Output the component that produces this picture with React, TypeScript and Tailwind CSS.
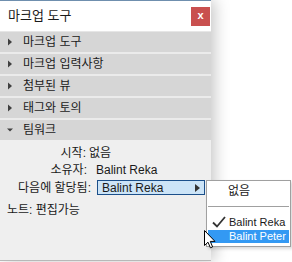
import React from 'react';

const sections = ['마크업 도구', '마크업 입력사항', '첨부된 뷰', '태그와 토의'];

const Arrow: React.FC<{ open?: boolean }> = ({ open }) => (
  <svg width="6" height="8" viewBox="0 0 6 8" className="shrink-0">
    {open ? (
      <path d="M0 2.5 L6 2.5 L3 5.5 Z" fill="#404040" />
    ) : (
      <path d="M1 0.5 L5 4 L1 7.5 Z" fill="#404040" />
    )}
  </svg>
);

const SectionRow: React.FC<{ label: string; open?: boolean }> = ({ label, open }) => (
  <div className="h-[20px] bg-[#d6d6d6] flex items-center pl-[7px] gap-[10px] text-[12px] text-[#1a1a1a]">
    <Arrow open={open} />
    <span>{label}</span>
  </div>
);

const Cursor: React.FC = () => (
  <svg width="12" height="19" viewBox="0 0 12 19" className="absolute left-[204px] top-[230px]">
    <path d="M0.5 0.5 L0.5 15.5 L4 12.2 L6.4 17.8 L8.6 16.9 L6.3 11.4 L11 11.4 Z" fill="#fff" stroke="#000" strokeWidth="1" strokeLinejoin="round" />
  </svg>
);

export default function App() {
  return (
    <div
      className="relative w-[292px] h-[262px] bg-white overflow-hidden"
      style={{ fontFamily: '"Liberation Sans", "Noto Sans CJK KR", sans-serif' }}
    >
      <div className="w-[211px] h-[261px] bg-[#efefef] border-t border-[#6f8fae] border-b border-b-[#b8b8b8] shadow-[4px_0_14px_rgba(0,0,0,0.22)] flex flex-col">
        <div className="h-[30px] bg-white flex items-center justify-between pl-[8px] pr-[1px]">
          <span className="text-[13px] text-[#1a1a1a]">마크업 도구</span>
          <div className="w-[19px] h-[19px] bg-[#c9504f] flex items-center justify-center text-white text-[11px] font-bold leading-none pb-[2px]">
            x
          </div>
        </div>
        <div className="h-[1px] bg-[#e6e6e6]" />
        <div className="flex flex-col gap-[2px] bg-[#ebebeb]">
          {sections.map((s) => (
            <SectionRow key={s} label={s} />
          ))}
          <SectionRow label="팀워크" open />
        </div>

        <div className="flex flex-col text-[12px] text-[#1a1a1a] pt-[4px]">
          <div className="flex h-[17px] items-center">
            <span className="w-[86px] text-right">시작:</span>
            <span className="ml-[3px]">없음</span>
          </div>
          <div className="flex h-[17px] items-center">
            <span className="w-[87px] text-right">소유자:</span>
            <span className="ml-[9px]">Balint Reka</span>
          </div>
          <div className="flex h-[19px] items-center">
            <span className="w-[91px] text-right">다음에 할당됨:</span>
            <div className="ml-[6px] w-[108px] h-[15px] bg-[#cce4f7] border border-[#1b4f8a] flex items-center justify-between pl-[4px] pr-[4px]">
              <span className="leading-none">Balint Reka</span>
              <svg width="5" height="8" viewBox="0 0 5 8">
                <path d="M0 0 L5 4 L0 8 Z" fill="#333" />
              </svg>
            </div>
          </div>
          <div className="flex h-[22px] items-end pl-[7px]">
            <span>노트: 편집가능</span>
          </div>
        </div>
      </div>

      <div className="absolute left-[206px] top-[180px] w-[85px] h-[67px] bg-white border border-[#a0a0a0] shadow-[2px_2px_3px_rgba(0,0,0,0.15)] text-[11px] text-[#1a1a1a] flex flex-col whitespace-nowrap">
        <div className="h-[17px] flex items-center pl-[21px] mt-[1px] text-[12px]">없음</div>
        <div className="h-[7px]" />
        <div className="mx-[1px] h-[1px] bg-[#a0a0a0]" />
        <div className="h-[7px]" />
        <div className="h-[16px] flex items-center pl-[5px]">
          <svg width="14" height="12" viewBox="0 0 14 12" className="shrink-0">
            <path d="M1 6.5 L5 10.5 L13 1" fill="none" stroke="#333" strokeWidth="1.8" />
          </svg>
          <span className="ml-[3px]">Balint Reka</span>
        </div>
        <div className="h-[13px] mx-[1px] bg-[#3399f3] text-white flex items-center pl-[21px]">Balint Peter</div>
      </div>

      <Cursor />
    </div>
  );
}
